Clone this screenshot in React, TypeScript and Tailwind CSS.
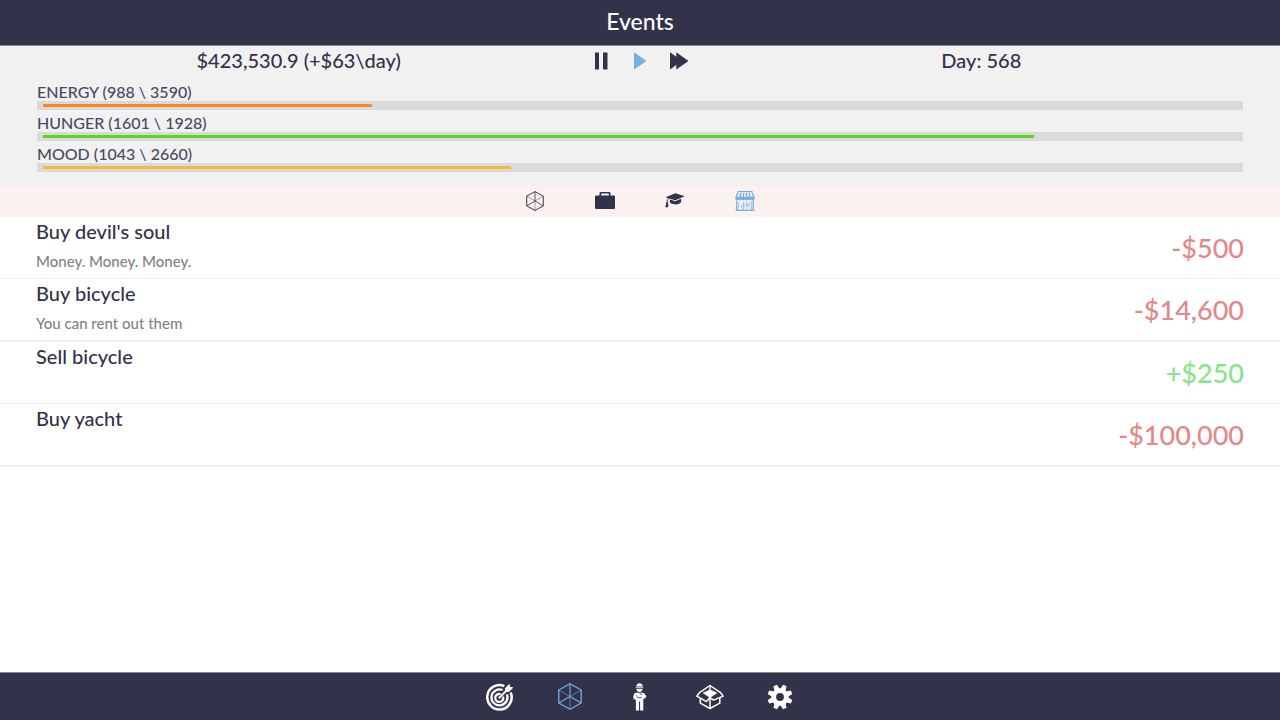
import { useState } from "react";
import type { ReactNode } from "react";
import clsx from "clsx";

type Stat = { id: string; label: string; value: number; max: number; color: string };
type GameEvent = { title: string; note?: string; price: number };
type IconItem = { id: string; label: string; icon: ReactNode };

const STATS: Stat[] = [
  { id: "energy", label: "ENERGY", value: 988, max: 3590, color: "bg-[#ff8522]" },
  { id: "hunger", label: "HUNGER", value: 1601, max: 1928, color: "bg-[#57d921]" },
  { id: "mood", label: "MOOD", value: 1043, max: 2660, color: "bg-[#fbba35]" },
];

const EVENTS: GameEvent[] = [
  { title: "Buy devil's soul", note: "Money. Money. Money.", price: -500 },
  { title: "Buy bicycle", note: "You can rent out them", price: -14600 },
  { title: "Sell bicycle", price: 250 },
  { title: "Buy yacht", price: -100000 },
];

const formatPrice = (n: number) => `${n < 0 ? "-" : "+"}$${Math.abs(n).toLocaleString("en-US")}`;

function CubeIcon({ className }: { className: string }) {
  return (
    <svg viewBox="0 0 24 27" className={className} fill="none" stroke="currentColor" strokeLinejoin="round">
      <path d="M12 .8 23.2 7v13L12 26.2.8 20V7Z" strokeWidth="1.3" />
      <path d="M12 .8v12.7M.8 20 12 13.5 23.2 20" strokeWidth="1.1" />
      <path d="M.8 7 12 13.5 23.2 7M12 13.5v12.7" strokeWidth="1" opacity=".6" />
    </svg>
  );
}

function BriefcaseIcon() {
  return (
    <svg viewBox="0 0 20 17" className="h-[17px] w-5" fill="currentColor">
      <path fillRule="evenodd" d="M4.500 3.500V1.200Q4.500 0 5.700 0h8.600q1.200 0 1.200 1.200v2.300H19q1 0 1 1V16q0 1-1 1H1q-1 0-1-1V4.500q0-1 1-1Zm1.700 0h7.600V1.600H6.200Z" />
    </svg>
  );
}

function CapIcon() {
  return (
    <svg viewBox="0 0 20 15" className="h-[15px] w-5" fill="currentColor">
      <path d="M.5 4.300 10.500.3 19.700 3.200 10.200 7.200Z" />
      <path d="M4.600 6.200 10.100 8.300 16 5.800 16.200 9.200Q13.500 11.900 9.500 11.300 6 11 5 9.400Z" />
      <path d="M10 3.700 3.500 5.200Q2 6 2 9.500" fill="none" stroke="currentColor" strokeWidth=".9" />
      <path d="M1.500 9h1.300l.6 4.800Q1.800 15 .4 13.800Z" />
    </svg>
  );
}

function StoreIcon() {
  return (
    <svg viewBox="0 0 20 20" className="size-5" fill="none" stroke="currentColor">
      <path d="M2.500.6h15" strokeWidth="1.200" />
      <path d="M3 1.500.9 6.500M17 1.500l2.100 5M6 2 4.800 6.500M8.700 2 8.100 6.500M11.300 2l.6 4.500M14 2l1.200 4.500" strokeWidth="1.400" />
      <path d="M.5 5.800h19v2.400q-1.300 2.300-3.100.4-1.600 1.800-3.200 0-1.600 1.800-3.200 0-1.600 1.800-3.200 0-1.600 1.800-3.200 0Q1.500 10.500.5 8.200Z" fill="currentColor" stroke="none" />
      <path d="M1.600 9.500v9.700M18.400 9.500v9.700M16.900 10v9" strokeWidth="1" />
      <path d="M.5 19.300h19" strokeWidth="1.400" />
      <path d="M3.200 19v-8M8.200 19v-8M6.300 14v2.500" strokeWidth=".9" />
      <path d="M9.500 11h6.300v6H9.500Z" strokeWidth=".5" opacity=".5" />
      <circle cx="12.500" cy="14" r="1.500" strokeWidth="1" />
    </svg>
  );
}

function TargetIcon() {
  return (
    <svg viewBox="0 0 28 28" className="size-7" fill="none" stroke="currentColor">
      <path d="M18.300 3.100A12.200 12.200 0 1 0 24.700 9.600" strokeWidth="2.500" />
      <path d="M16.600 7A8 8 0 1 0 20.900 11.400" strokeWidth="2.300" />
      <path d="M14.600 11.200A4 4 0 1 0 17 13.600" strokeWidth="2.200" />
      <path d="M12.800 15.200 22.500 5.500" strokeWidth="2" />
      <path d="M19.300 8.700 19 5.300 23.300.7l.8 3.100 3.300.8-4.500 4.400Z" fill="currentColor" stroke="none" />
    </svg>
  );
}

function PersonIcon() {
  return (
    <svg viewBox="0 0 14 28" className="h-7 w-3.5" fill="currentColor">
      <path d="M3.200 3.600Q3.400.3 6.500.2q3.100.1 3.300 3.400Z" />
      <path d="M2.800 4.300h7.400v.9H2.800Z" />
      <path d="M3.500 6h6q-.3 3-3 3.100Q3.800 9 3.500 6Z" />
      <path d="M2.700 9.700h7.500q1 .2 1.500 1.300l1.800 2.400-2.200 2.300-1 .4v11.300H7.100V18.500H6v8.900H2.900V17L1 16.300q-.9-1-.6-2.900l.8-2.700q.5-.9 1.500-1Z" />
      <path d="M3 12.200 5.200 14.800l3.600-.5M6.400 10.200l2.900 1.600" fill="none" stroke="#32324a" strokeWidth=".8" />
    </svg>
  );
}

function BoxIcon() {
  return (
    <svg viewBox="0 0 28 26" className="h-[26px] w-7" fill="none" stroke="currentColor" strokeWidth="1.500" strokeLinejoin="round">
      <path d="M14 1.500 3.800 8.300.8 12.200l9.700 5.400L14 13.500l3.500 2.600 9.700-4-3-3.800Z" />
      <path d="M14 1.500v5" strokeWidth="1.300" />
      <path d="M7.200 9 14 5.800 20.800 9 14 13.500Z" fill="currentColor" strokeWidth=".6" />
      <path d="M4.300 14.500v4.700L14 24.500l9.800-5.300v-5.500M14 14v10.500" />
    </svg>
  );
}

function GearIcon() {
  return (
    <svg viewBox="-12 -12 24 24" className="size-6 overflow-visible" fill="currentColor">
      <mask id="gear-hole" maskUnits="userSpaceOnUse" x="-14" y="-14" width="28" height="28">
        <rect x="-14" y="-14" width="28" height="28" fill="white" />
        <circle r="3.900" fill="black" />
      </mask>
      <g mask="url(#gear-hole)">
        <circle r="8.700" />
        {[22.5, 67.5, 112.5, 157.5].map((a) => (
          <path key={a} transform={`rotate(${a})`} d="M-1.900-12.500h3.800L2.800-7V7L1.900 12.500h-3.800L-2.800 7V-7Z" />
        ))}
      </g>
    </svg>
  );
}

const SPEEDS: IconItem[] = [
  {
    id: "pause",
    label: "Pause",
    icon: (
      <svg viewBox="0 0 20 18" className="h-[18px] w-5" fill="currentColor">
        <path d="M4 .5h4v17H4ZM12 .5h4.500v17H12Z" />
      </svg>
    ),
  },
  {
    id: "play",
    label: "Play",
    icon: (
      <svg viewBox="0 0 20 18" className="h-[18px] w-5" fill="currentColor">
        <path d="M4 .3 16.500 9 4 17.500Z" />
      </svg>
    ),
  },
  {
    id: "fast",
    label: "Fast forward",
    icon: (
      <svg viewBox="0 0 20 18" className="h-[18px] w-5" fill="currentColor">
        <path d="M1 .3 7.300 4.800V.3L19.500 9 7.300 17.500V13L1 17.500Z" />
      </svg>
    ),
  },
];

const CATEGORIES: IconItem[] = [
  { id: "all", label: "All events", icon: <CubeIcon className="h-5 w-[18px]" /> },
  { id: "work", label: "Work", icon: <BriefcaseIcon /> },
  { id: "study", label: "Education", icon: <CapIcon /> },
  { id: "shop", label: "Shop", icon: <StoreIcon /> },
];

const PAGES: IconItem[] = [
  { id: "goals", label: "Goals", icon: <TargetIcon /> },
  { id: "events", label: "Events", icon: <CubeIcon className="h-[27px] w-6" /> },
  { id: "person", label: "Character", icon: <PersonIcon /> },
  { id: "items", label: "Items", icon: <BoxIcon /> },
  { id: "settings", label: "Settings", icon: <GearIcon /> },
];

function StatBar({ stat }: { stat: Stat }) {
  return (
    <div className="h-[31px]">
      <p className="h-[17px] text-base leading-4 text-[#4b4a60]">
        {stat.label} ({stat.value} \ {stat.max})
      </p>
      <div
        className="h-[9px] bg-[#dadada] px-1.5 py-[3px]"
        role="progressbar"
        aria-label={stat.label}
        aria-valuenow={stat.value}
        aria-valuemax={stat.max}
      >
        <div className={clsx("h-[3px]", stat.color)} style={{ width: `${(stat.value / stat.max) * 100}%` }} />
      </div>
    </div>
  );
}

export default function App() {
  const [speed, setSpeed] = useState("play");
  const [category, setCategory] = useState("shop");
  const [page, setPage] = useState("events");

  return (
    <div className="flex min-h-screen flex-col bg-white font-['Lato',sans-serif] font-medium text-[#32324a]">
      <header className="flex h-[46px] items-center justify-center border-b border-[#85849a] bg-[#32324a] pb-1">
        <h1 className="text-[23px] leading-6 text-white">Events</h1>
      </header>

      <section className="bg-[#f1f1f1] pb-[9px]">
        <div className="grid h-[30px] grid-cols-3 items-center px-[10%] text-center text-xl leading-5">
          <p className="pb-0.5">$423,530.9 (+$63\day)</p>
          <div className="flex justify-center gap-[19px]">
            {SPEEDS.map((s) => (
              <button
                key={s.id}
                type="button"
                aria-label={s.label}
                onClick={() => setSpeed(s.id)}
                className={clsx("flex w-5 justify-center", speed === s.id && "text-[#72b1e0]")}
              >
                {s.icon}
              </button>
            ))}
          </div>
          <p className="pb-0.5">Day: 568</p>
        </div>
        <div className="px-[37px] pt-2">
          {STATS.map((s) => (
            <StatBar key={s.id} stat={s} />
          ))}
        </div>
      </section>

      {/* Event categories */}
      <nav className="flex h-[31px] items-center justify-center gap-[50px] bg-[#fbf2ef] pb-0.5">
        {CATEGORIES.map((c) => (
          <button
            key={c.id}
            type="button"
            aria-label={c.label}
            onClick={() => setCategory(c.id)}
            className={clsx("flex w-5 justify-center", category === c.id && "text-[#72b1e0]")}
          >
            {c.icon}
          </button>
        ))}
      </nav>

      <main className="flex-1">
        <ul>
          {EVENTS.map((e) => (
            <li key={e.title} className="border-b border-[#f0f0f1] even:border-b-2">
              <button type="button" className="flex min-h-[61px] w-full items-center justify-between px-9 text-left">
                <span className="self-stretch pt-0.5">
                  <span className="block text-xl leading-6">{e.title}</span>
                  {e.note && <span className="mt-2 block text-[15px] leading-5 text-[#838385]">{e.note}</span>}
                </span>
                <span className={clsx("text-[27px] leading-8", e.price < 0 ? "text-[#e38888]" : "text-[#89e38a]")}>
                  {formatPrice(e.price)}
                </span>
              </button>
            </li>
          ))}
        </ul>
      </main>

      <nav className="flex h-12 items-center justify-center gap-[42px] border-t border-[#85849a] bg-[#32324a] text-white">
        {PAGES.map((p) => (
          <button
            key={p.id}
            type="button"
            aria-label={p.label}
            onClick={() => setPage(p.id)}
            className={clsx("flex w-7 justify-center", page === p.id && "text-[#72b1e0]")}
          >
            {p.icon}
          </button>
        ))}
      </nav>
    </div>
  );
}
